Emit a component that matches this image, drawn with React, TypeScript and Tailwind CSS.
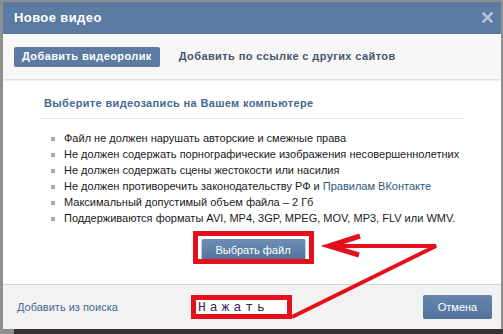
import React from 'react';

const rules: { text: string; link?: string }[] = [
  { text: 'Файл не должен нарушать авторские и смежные права' },
  { text: 'Не должен содержать порнографические изображения несовершеннолетних' },
  { text: 'Не должен содержать сцены жестокости или насилия' },
  { text: 'Не должен противоречить законодательству РФ и ', link: 'Правилам ВКонтакте' },
  { text: 'Максимальный допустимый объем файла – 2 Гб' },
  { text: 'Поддерживаются форматы AVI, MP4, 3GP, MPEG, MOV, MP3, FLV или WMV.' },
];

const font = "font-['Liberation_Sans',Arial,sans-serif]";

export default function App() {
  return (
    <div className={`relative w-[503px] h-[334px] overflow-hidden bg-[#8f8f8f] pt-[2px] pl-[3px] ${font}`}>
      <div className="flex flex-col w-[498px] h-[327px] bg-white">
        {/* header */}
        <div className="flex items-center justify-between h-[32px] bg-[#5b7ba2] pl-[11px] pr-[8px]">
          <span className="text-[13px] font-bold text-white tracking-[0.4px]">Новое видео</span>
          <svg width="11" height="11" viewBox="0 0 11 11" className="mb-[1px]">
            <path d="M1.5 1.5 L9.5 9.5 M9.5 1.5 L1.5 9.5" stroke="#b1c3d8" strokeWidth="2.6" strokeLinecap="square" />
          </svg>
        </div>

        {/* tabs */}
        <div className="flex items-center gap-[19px] h-[46px] bg-[#f7f7f7] pl-[11px] border-b border-[#e2e2e2] shadow-[0_1px_1px_rgba(0,0,0,0.06)]">
          <div className="flex items-center h-[20px] px-[8px] rounded-[2px] bg-[#5b7ba2] text-[11px] font-bold text-white tracking-[0.4px] whitespace-nowrap">
            Добавить видеоролик
          </div>
          <div className="text-[11px] font-bold text-[#45556a] tracking-[0.4px] whitespace-nowrap">
            Добавить по ссылке с других сайтов
          </div>
        </div>

        {/* body */}
        <div className="flex flex-col flex-1 px-[37px] pt-[15px]">
          <div className="pl-[4px] pb-[6px] border-b border-[#e4e8ec] text-[11px] font-bold text-[#45688e] tracking-[0.35px] whitespace-nowrap">
            Выберите видеозапись на Вашем компьютере
          </div>
          <ul className="mt-[12px] pl-[11px] flex flex-col">
            {rules.map((r, i) => (
              <li key={i} className="flex items-center h-[16px] text-[11px] text-[#1a1a1a] whitespace-nowrap">
                <span className="w-[4px] h-[4px] bg-[#a9a9a9] mr-[9px] shrink-0" />
                <span>
                  {r.text}
                  {r.link && <span className="text-[#2b587a]">{r.link}</span>}
                </span>
              </li>
            ))}
          </ul>
          <div className="flex justify-center mt-[12px] pl-[2px]">
            <div className="flex items-center justify-center w-[105px] h-[23px] rounded-[2px] border-x border-[#c8d1dc] bg-gradient-to-b from-[#6f8fb5] to-[#4d6f98] text-[11px] text-white">
              Выбрать файл
            </div>
          </div>
        </div>

        {/* footer */}
        <div className="flex items-center justify-between h-[45px] bg-[#f2f2f2] border-t border-[#d4d4d4] pl-[14px] pr-[9px]">
          <span className="text-[11px] text-[#45688e]">Добавить из поиска</span>
          <div className="flex items-center justify-center w-[69px] h-[24px] rounded-[2px] bg-gradient-to-b from-[#6585ad] to-[#52739c] text-[11px] text-white">
            Отмена
          </div>
        </div>
      </div>
      <div className="ml-[11px] h-[6px] bg-[#3a3232]" />

      {/* annotations */}
      <div className="absolute left-[193px] top-[231px] w-[121px] h-[33px] border-[5px] border-[#e4101c]" />
      <div className="absolute left-[191px] top-[295px] w-[101px] h-[24px] border-[5px] border-[#e4101c] bg-white flex items-center pl-[2px]">
        <span className="font-['Liberation_Mono',monospace] text-[13px] leading-none text-[#3b1d5a] tracking-[4px]">Нажать</span>
      </div>
      <svg className="absolute left-0 top-0" width="503" height="334" viewBox="0 0 503 334">
        <polyline points="360,236 329,246 359,255" fill="none" stroke="#e4101c" strokeWidth="5" strokeLinejoin="miter" />
        <polyline points="332,246 436,246 292,317" fill="none" stroke="#e4101c" strokeWidth="4" strokeLinejoin="miter" />
      </svg>
    </div>
  );
}
